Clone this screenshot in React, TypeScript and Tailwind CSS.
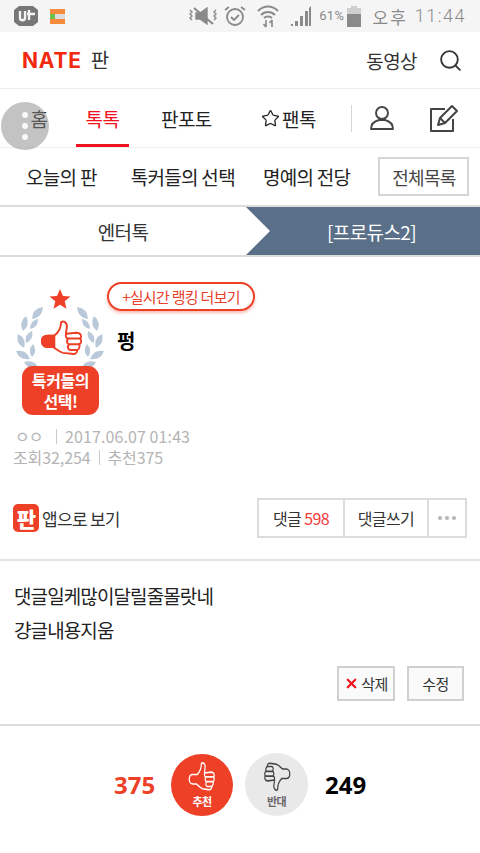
import { Search, Star, X } from 'lucide-react';

const FONT = "font-['Noto_Sans_CJK_KR','Noto_Sans',sans-serif]";

const THUMB = 'M20 1C23-1 27 2 26 7L25 13L36 12C41 12 42 16 40 18C42 20 41 23 39 24C40 26 39 29 37 30C37 33 35 35 31 34L22 33C18 32 15 29 12 27L6 27C2 27 0 24 0 21C0 17 2 15 6 15L13 15C17 12 20 7 20 1Z';
const FINGERS = 'M26 13C24 15 25 18 28 18L40 18M28 18C25 20 26 24 29 24L39 24M29 24C26 26 27 30 30 30L37 30';

function ThumbIcon({ className, stroke, fill, cuff, width, stretch }: { className?: string; stroke: string; fill: string; cuff?: boolean; width: number; stretch?: boolean }) {
  return (
    <svg viewBox="-2 -2 46 39" preserveAspectRatio={stretch ? 'none' : undefined} className={className} fill={fill} stroke={stroke} strokeWidth={width} strokeLinejoin="round" strokeLinecap="round">
      <path d={THUMB} />
      {cuff && <path d="M6 15L13 15L13 27L6 27C2 27 0 24 0 21C0 17 2 15 6 15Z" fill={stroke} />}
      <path d={FINGERS} fill="none" />
    </svg>
  );
}

// wreath leaves, left half, from base to tip of each leaf
const LEAVES = [
  [28, 0, 17, 12], [11, 9, 8, 24], [23, 12, 15, 22], [3, 27, 9, 41], [17, 24, 11, 36],
  [1, 44, 15, 52], [18, 37, 17, 50], [9, 55, 24, 61],
];

function leafPath([x1, y1, x2, y2]: number[]) {
  const mx = (x1 + x2) / 2;
  const my = (y1 + y2) / 2;
  const dx = (y2 - y1) * 0.42;
  const dy = (x1 - x2) * 0.42;
  return `M${x1} ${y1}Q${mx + dx} ${my + dy} ${x2} ${y2}Q${mx - dx} ${my - dy} ${x1} ${y1}Z`;
}

function Wreath() {
  const half = LEAVES.map(l => <path key={l.join('-')} d={leafPath(l)} />);
  return (
    <svg viewBox="0 0 90 62" className="w-[90px] h-[62px]" fill="#b9c9d9">
      {half}
      <g transform="translate(90 0) scale(-1 1)">{half}</g>
    </svg>
  );
}

function Badge() {
  return (
    <div className="relative w-[92px] h-[139px] flex flex-col items-center shrink-0">
      <svg viewBox="0 0 24 24" className="w-[22px] h-[22px] mt-[12px] -ml-[1px]" fill="#ee4027">
        <path d="M12 1l3.2 7.6 8.2.6-6.3 5.3 2 8-7.1-4.3-7.1 4.3 2-8L.6 9.2l8.2-.6z" />
      </svg>
      <div className="absolute top-[31px] left-[1px]"><Wreath /></div>
      <div className="absolute top-[43px] left-[26px]">
        <ThumbIcon className="w-[44px] h-[38px]" stroke="#ee4027" fill="#fff" cuff width={2} />
      </div>
      <div className="absolute bottom-0 left-[8px] w-[77px] h-[49px] rounded-[11px] bg-[#ee4027] flex items-center justify-center text-center text-white font-bold text-[16px] leading-[21px] tracking-[-0.4px]">
        <p>톡커들의<br />선택!</p>
      </div>
    </div>
  );
}

function StatusBar() {
  return (
    <div className="h-[32px] bg-[#f5f5f5] flex items-center pl-[13px] pr-[14px] text-[#8a8a8a]">
      <svg viewBox="0 0 26 24" className="w-[26px] h-[24px]" fill="#777">
        <path d="M6 2h14l5 4v12l-5 4H6l-5-4V6z" />
        <path d="M7 7v7c0 3 5 3 5 0V7M16 6v10M14 10h8" fill="none" stroke="#f5f5f5" strokeWidth="2.4" />
      </svg>
      <div className="ml-[11px] w-[15px] h-[15px] flex flex-col">
        <div className="h-[5px] bg-[#f58a3c]" />
        <div className="h-[5px] bg-[#dcdcdc] flex"><div className="w-[5px] bg-[#6cc04a]" /></div>
        <div className="h-[5px] bg-[#f58a3c]" />
      </div>
      <div className="ml-auto flex items-center">
        <svg viewBox="0 0 30 20" className="w-[30px] h-[20px]" fill="none" stroke="#8a8a8a" strokeWidth="1.4">
          <path d="M8 7h4l7-5v16l-7-5H8z" fill="#8a8a8a" />
          <path d="M6 2l19 16" strokeWidth="2" />
          <path d="M2 4l2 2-2 2 2 2-2 2 2 2M28 4l-2 2 2 2-2 2 2 2-2 2" />
        </svg>
        <svg viewBox="0 0 22 22" className="ml-[6px] w-[22px] h-[22px]" fill="none" stroke="#8a8a8a" strokeWidth="1.8">
          <circle cx="11" cy="12" r="8" />
          <path d="M7 12l3 3 5-5M1 5l4-3M21 5l-4-3" />
        </svg>
        <svg viewBox="0 0 22 24" className="ml-[11px] w-[22px] h-[24px]" fill="none" stroke="#8a8a8a" strokeWidth="2">
          <path d="M1 7c6-6 14-6 20 0M4 11c4-4 10-4 14 0M7 14c2-2 6-2 8 0" />
          <path d="M9 16v7M6.5 20l2.5 3M15 23v-7M12.5 19l2.5-3" strokeWidth="1.6" />
        </svg>
        <svg viewBox="0 0 22 22" className="ml-[11px] w-[22px] h-[22px]" fill="#8a8a8a">
          <path d="M1 21h2v-2H1zM5 21h3v-5H5zM10 21h3v-10h-3zM15 21h3V6h-3zM19 21h2V1l-2 2z" />
        </svg>
        <span className="ml-[7px] text-[13px] font-['Roboto',sans-serif] tracking-[0.4px]">61%</span>
        <div className="ml-[2px] w-[14px] h-[21px] flex flex-col items-center">
          <div className="w-[6px] h-[2px] bg-[#cfcfcf]" />
          <div className="w-[14px] h-[6px] bg-[#cfcfcf]" />
          <div className="w-[14px] h-[13px] bg-[#8a8a8a]" />
        </div>
        <span className="ml-[12px] text-[17px] tracking-[2px] leading-none">오후</span>
        <span className="ml-[7px] text-[18px] font-['Roboto',sans-serif] font-light tracking-[1.5px] leading-none">11:44</span>
      </div>
    </div>
  );
}

export default function App() {
  return (
    <div className={`${FONT} relative w-[480px] h-[853px] bg-white overflow-hidden text-[#222]`}>
      <StatusBar />

      <header className="h-[57px] border-b border-[#eeeeee] flex items-center pl-[22px] pr-[17px]">
        <span className="font-['Inter',sans-serif] font-bold text-[21px] tracking-[0.8px] text-[#f0290f] leading-none">NATE</span>
        <span className="ml-[9px] text-[20px] text-[#333] leading-none">판</span>
        <span className="ml-auto text-[19px] text-[#333] tracking-[-0.6px] leading-none">동영상</span>
        <Search className="ml-[21px] w-[25px] h-[25px] text-[#333]" strokeWidth={1.8} />
      </header>

      <nav className="h-[59px] border-b border-[#eeeeee] flex items-center text-[19px] tracking-[-0.6px] leading-none whitespace-nowrap">
        <a className="w-[76px] h-full flex items-center justify-center pl-[2px]">홈</a>
        <a className="w-[53px] h-full flex items-center justify-center text-[#f0131e] border-b-[3px] border-[#f0131e] pt-[3px]">톡톡</a>
        <a className="ml-[32px] w-[50px] text-center">판포토</a>
        <a className="ml-[50px] w-[56px] flex items-center">
          <Star className="w-[19px] h-[19px] mr-[2px] shrink-0" strokeWidth={1.6} />
          팬톡
        </a>
        <div className="ml-[34px] w-px h-[27px] bg-[#d5d5d5]" />
        <svg viewBox="0 0 24 24" className="ml-[18px] w-[24px] h-[24px]" fill="none" stroke="#444" strokeWidth="1.9" strokeLinejoin="round">
          <circle cx="12" cy="7" r="6" />
          <path d="M1 23c0-5 4-8 8-9h6c4 1 8 4 8 9z" />
        </svg>
        <svg viewBox="0 0 30 28" className="ml-[35px] w-[30px] h-[28px]" fill="none" stroke="#444" strokeWidth="2" strokeLinejoin="round">
          <path d="M16 5H2v22h22V15" />
          <path d="M9 21l2-7L23 2l5 5-12 12z" />
          <path d="M11 14l5 5" />
        </svg>
      </nav>

      <div className="h-[57px] flex items-center pl-[26px] text-[19px] tracking-[-0.7px] leading-none whitespace-nowrap">
        <a>오늘의 판</a>
        <a className="ml-[34px]">톡커들의 선택</a>
        <a className="ml-[28px]">명예의 전당</a>
        <a className="ml-[28px] w-[91px] h-[39px] border-2 border-[#d5d5d5] flex items-center justify-center text-[#444] text-[18px]">전체목록</a>
      </div>

      <div className="h-[52px] border-y-2 border-[#dcdcdc] flex text-[19px] tracking-[-0.6px] leading-none">
        <a className="w-[246px] flex items-center justify-center text-[#333]">엔터톡</a>
        <div className="relative flex-1 bg-[#5a7089] flex items-center justify-center pl-[17px] text-white">
          <span className="absolute left-0 top-0 w-0 h-0 border-y-[24px] border-y-transparent border-l-[24px] border-l-white" />
          [프로듀스2]
        </div>
      </div>

      <section className="pl-[14px] pt-[19px]">
        <div className="flex">
          <Badge />
          <div className="pt-[6px] ml-px">
            <a className="w-[148px] h-[29px] rounded-full border-2 border-[#ee4027] shadow-[0_2px_3px_rgba(238,64,39,0.35)] flex items-center justify-center text-[15px] text-[#e8402a] tracking-[-0.7px] leading-none">+실시간 랭킹 더보기</a>
            <h1 className="mt-[16px] ml-[10px] text-[20px] font-bold text-black leading-[28px]">펑</h1>
          </div>
        </div>
        <div className="mt-[10px] flex items-center text-[16px] text-[#b4b4b4] leading-[22px] tracking-[0.1px] whitespace-nowrap">
          <span className="w-[28px] pl-px tracking-[-1px]">ㅇㅇ</span>
          <span className="ml-[14px] w-px h-[15px] bg-[#cccccc]" />
          <span className="ml-[8px]">2017.06.07 01:43</span>
        </div>
        <div className="-ml-px flex items-center text-[16px] text-[#b4b4b4] leading-[20px] tracking-[-0.1px] whitespace-nowrap">
          <span>조회32,254</span>
          <span className="mx-[8px] w-px h-[15px] bg-[#cccccc]" />
          <span>추천375</span>
        </div>
      </section>

      <div className="mt-[31px] h-[63px] border-b-2 border-[#e2e2e2] pl-[13px] pr-[13px] pb-[21px] flex items-center justify-between">
        <a className="flex items-center text-[17px] text-[#333] tracking-[-0.7px] leading-none">
          <span className="w-[26px] h-[28px] rounded-[5px] bg-[#ee4027] flex items-center justify-center text-white font-black text-[21px] mr-[3px]">판</span>
          앱으로 보기
        </a>
        <div className="h-[40px] flex border-2 border-[#dcdcdc] text-[16px] text-[#333] tracking-[-0.6px] leading-none">
          <a className="w-[84px] flex items-center justify-center">댓글&nbsp;<span className="text-[#f03a3a]">598</span></a>
          <a className="w-[84px] border-l-2 border-[#dcdcdc] flex items-center justify-center">댓글쓰기</a>
          <a className="w-[38px] border-l-2 border-[#dcdcdc] flex items-center justify-center gap-[3px]">
            <i className="w-[4px] h-[4px] rounded-full bg-[#b5b5b5]" />
            <i className="w-[4px] h-[4px] rounded-full bg-[#b5b5b5]" />
            <i className="w-[4px] h-[4px] rounded-full bg-[#b5b5b5]" />
          </a>
        </div>
      </div>

      <div className="pl-[14px] pt-[18px] text-[19px] text-[#222] leading-[34px] tracking-[-0.9px]">
        <p>댓글일케많이달릴줄몰랏네</p>
        <p>걍글내용지움</p>
      </div>

      <div className="mt-[19px] pr-[16px] flex justify-end gap-[12px] text-[15px] text-[#333] leading-none tracking-[-0.5px]">
        <a className="w-[58px] h-[35px] bg-[#fafafa] border-2 border-[#d0d0d0] flex items-center justify-center">
          <X className="w-[15px] h-[15px] text-[#f0131e] mr-[2px]" strokeWidth={3.5} />
          삭제
        </a>
        <a className="w-[57px] h-[35px] bg-[#fafafa] border-2 border-[#d0d0d0] flex items-center justify-center">수정</a>
      </div>

      <div className="mt-[23px] border-t-2 border-[#dcdcdc] pt-[27px] flex items-center font-['Noto_Sans',sans-serif] text-[24px] font-bold leading-none">
        <span className="ml-[114px] w-[57px] text-[#ee4027]">375</span>
        <div className="w-[62px] h-[62px] rounded-full bg-[#ee4027] flex flex-col items-center justify-center text-white">
          <ThumbIcon className="w-[28px] h-[31px]" stroke="#fff" fill="none" width={2} stretch />
          <span className={`${FONT} mt-[2px] text-[11px] leading-[14px] tracking-[-0.5px]`}>추천</span>
        </div>
        <div className="ml-[12px] w-[63px] h-[63px] rounded-full bg-[#e9e9e9] flex flex-col items-center justify-center text-[#666]">
          <ThumbIcon className="w-[28px] h-[31px] rotate-180" stroke="#444" fill="none" width={2} stretch />
          <span className={`${FONT} mt-[2px] text-[11px] leading-[14px] tracking-[-0.5px]`}>반대</span>
        </div>
        <span className="ml-[17px] text-black">249</span>
      </div>

      <div className="absolute left-[1px] top-[102px] w-[48px] h-[48px] rounded-full bg-[#888888]/50 flex flex-col items-center justify-center gap-[5px]">
        <i className="w-[6px] h-[6px] rounded-full bg-white/90" />
        <i className="w-[6px] h-[6px] rounded-full bg-white/90" />
        <i className="w-[6px] h-[6px] rounded-full bg-white/90" />
      </div>
    </div>
  );
}
